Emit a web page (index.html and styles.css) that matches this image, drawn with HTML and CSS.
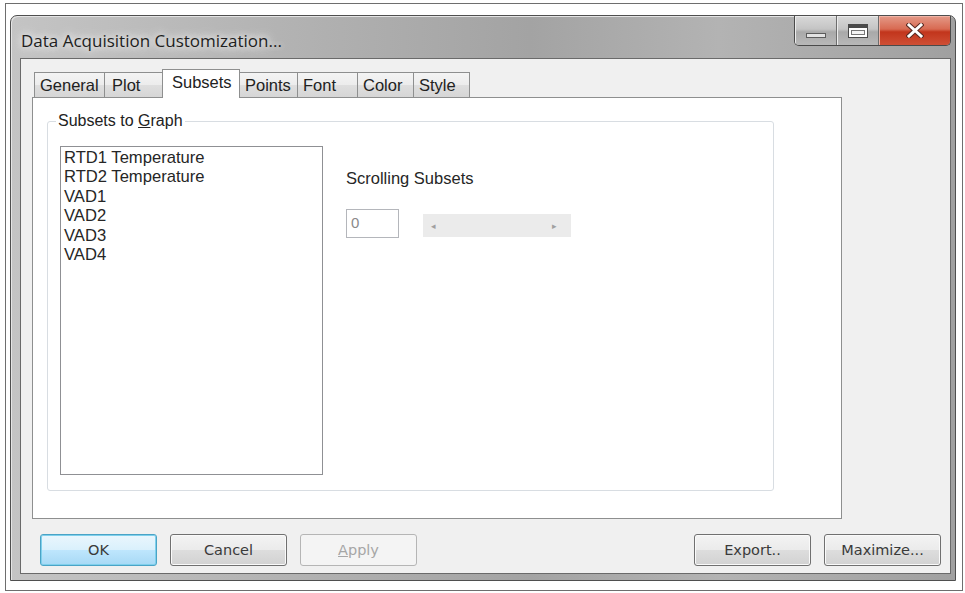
FILE: index.html
```html
<!DOCTYPE html>
<html lang="en">
<head>
  <meta charset="UTF-8">
  <title>Data Acquisition Customization...</title>
  <link rel="stylesheet" href="styles.css">
</head>
<body>
  <div class="screen">
    <div class="window">

      <!-- Title bar -->
      <div class="titlebar">
        <span class="title">Data Acquisition Customization...</span>
        <div class="caption-buttons">
          <div class="cap cap-min"><span class="min-glyph"></span></div>
          <div class="cap cap-max"><span class="max-glyph"></span></div>
          <div class="cap cap-close">
            <svg width="18" height="15" viewBox="0 0 18 15">
              <path d="M3 2 L15 13 M15 2 L3 13" stroke="#5a2a22" stroke-width="5" stroke-linecap="square"/>
              <path d="M3 2 L15 13 M15 2 L3 13" stroke="#ffffff" stroke-width="3" stroke-linecap="square"/>
            </svg>
          </div>
        </div>
      </div>

      <!-- Client area -->
      <div class="client">
        <div class="tab-control">
          <div class="tabs">
            <div class="tab">General</div>
            <div class="tab">Plot</div>
            <div class="tab active">Subsets</div>
            <div class="tab">Points</div>
            <div class="tab">Font</div>
            <div class="tab">Color</div>
            <div class="tab">Style</div>
          </div>

          <div class="tab-panel">
            <fieldset class="group">
              <legend>Subsets to <u>G</u>raph</legend>
              <div class="group-body">
                <ul class="listbox">
                  <li>RTD1 Temperature</li>
                  <li>RTD2 Temperature</li>
                  <li>VAD1</li>
                  <li>VAD2</li>
                  <li>VAD3</li>
                  <li>VAD4</li>
                </ul>
                <div class="scrolling">
                  <div class="label">Scrolling Subsets</div>
                  <div class="scroll-row">
                    <div class="edit">0</div>
                    <div class="hscroll">
                      <span class="arrow">&#9666;</span>
                      <span class="arrow">&#9656;</span>
                    </div>
                  </div>
                </div>
              </div>
            </fieldset>
          </div>
        </div>

        <!-- Dialog buttons -->
        <div class="button-row">
          <button class="btn default">OK</button>
          <button class="btn">Cancel</button>
          <button class="btn disabled"><u>A</u>pply</button>
          <div class="spacer"></div>
          <button class="btn">Export..</button>
          <button class="btn">Maximize...</button>
        </div>
      </div>

    </div>
  </div>
</body>
</html>
```

FILE: styles.css
```css
html, body {
  margin: 0;
  padding: 0;
  background-color: #ffffff;
}
body {
  width: 965px;
  height: 593px;
  overflow: hidden;
  font-family: "Liberation Sans", Arial, sans-serif;
}
.screen {
  box-sizing: border-box;
  width: 958px;
  height: 588px;
  margin: 3px 0 0 5px;
  border: 1px solid #6e6e6e;
  padding: 11px 6px 9px 4px;
  background-color: #ffffff;
}

/* Window frame */
.window {
  box-sizing: border-box;
  height: 566px;
  display: flex;
  flex-direction: column;
  border: 1px solid #4f4f4f;
  border-radius: 7px 7px 0 0;
  padding: 0 4px 6px 9px;
  background: linear-gradient(to right, #c4c4c4 0%, #b5b5b5 25%, #a3a3a3 55%, #b3b3b3 75%, #a0a0a0 100%);
  box-shadow: inset 1px 1px 0 #e4e4e4;
}
.titlebar {
  height: 42px;
  display: flex;
  justify-content: space-between;
  align-items: flex-start;
}
.title {
  margin-top: 13px;
  padding-left: 1px;
  font-family: "Open Sans", "Noto Sans", sans-serif;
  font-size: 17px;
  color: #1e1e1e;
  text-shadow: 0 0 6px #f0f0f0, 0 0 10px #e8e8e8, 0 0 14px #e0e0e0;
}
.caption-buttons {
  display: flex;
  height: 29px;
  border: 1px solid #4a4a4a;
  border-top: none;
  border-radius: 0 0 5px 5px;
  overflow: hidden;
}
.cap {
  height: 29px;
  display: flex;
  align-items: center;
  justify-content: center;
}
.cap-min, .cap-max {
  width: 41px;
  background: linear-gradient(#d9d9d9 0%, #c4c4c4 45%, #a9a9a9 55%, #b8b8b8 100%);
  box-shadow: inset 1px 1px 0 #ececec;
  border-right: 1px solid #6d6d6d;
}
.cap-close {
  width: 71px;
  background: linear-gradient(#e49a88 0%, #d86a52 45%, #c2351c 55%, #cf4f35 100%);
  box-shadow: inset 1px 1px 0 #f0b4a6;
}
.min-glyph {
  width: 18px;
  height: 3px;
  margin-top: 10px;
  background-color: #e2e2e2;
  border: 1px solid #5c5c5c;
}
.max-glyph {
  box-sizing: border-box;
  width: 20px;
  height: 14px;
  border: 1px solid #4a4a4a;
  border-top-width: 4px;
  background-color: #f4f4f4;
  box-shadow: inset 0 0 0 2px #ffffff, inset 0 0 0 3px #777777;
}

/* Client area */
.client {
  flex: 1;
  display: flex;
  flex-direction: column;
  border: 1px solid #6a6a6a;
  background-color: #f0f0f0;
  padding: 10px 0 7px 11px;
}
.tab-control {
  width: 810px;
}
.tabs {
  height: 28px;
  display: flex;
  align-items: flex-end;
  padding-left: 2px;
  font-size: 16.5px;
  color: #222;
}
.tab {
  box-sizing: border-box;
  height: 25px;
  line-height: 24px;
  padding-left: 5px;
  border-top: 1px solid #8e8f8f;
  border-left: 1px solid #8e8f8f;
  background: linear-gradient(#f4f4f4 0%, #ececec 50%, #dedede 51%, #d6d6d6 100%);
}
.tab:nth-child(1) { width: 70px; }
.tab:nth-child(2) { width: 58px; padding-left: 7px; }
.tab:nth-child(4) { width: 57px; }
.tab:nth-child(5) { width: 60px; }
.tab:nth-child(6) { width: 56px; }
.tab:nth-child(7) { width: 57px; border-right: 1px solid #8e8f8f; }
.tab.active {
  position: relative;
  z-index: 1;
  width: 78px;
  height: 29px;
  margin-bottom: -1px;
  padding-left: 9px;
  line-height: 24px;
  border-right: 1px solid #8e8f8f;
  background: #ffffff;
}
.tab.active + .tab {
  border-left: none;
}
.tab-panel {
  box-sizing: border-box;
  height: 422px;
  border: 1px solid #8e8f8f;
  background-color: #ffffff;
  padding: 14px 0 0 14px;
}

/* Group box */
.group {
  box-sizing: border-box;
  width: 727px;
  height: 379px;
  margin: 0;
  padding: 0 12px;
  border: 1px solid #d8dde2;
  border-radius: 3px;
}
.group legend {
  margin-left: -4px;
  padding: 0 2px;
  font-size: 16px;
  line-height: 18px;
  color: #222;
}
.group-body {
  display: flex;
  margin-top: 16px;
}
.listbox {
  box-sizing: border-box;
  width: 263px;
  height: 329px;
  margin: 0;
  padding: 1px 3px;
  list-style: none;
  border: 1px solid #8f9094;
  font-size: 16.6px;
  line-height: 19.4px;
  color: #262626;
}
.scrolling {
  margin-left: 23px;
  padding-top: 23px;
}
.label {
  font-size: 16.5px;
  line-height: 18px;
  color: #262626;
}
.scroll-row {
  display: flex;
  margin-top: 22px;
}
.edit {
  box-sizing: border-box;
  width: 53px;
  height: 29px;
  padding: 4px 0 0 4px;
  border: 1px solid #b4b6bb;
  font-size: 15px;
  color: #8a8a8a;
}
.hscroll {
  width: 148px;
  height: 23px;
  margin: 5px 0 0 24px;
  display: flex;
  justify-content: space-between;
  align-items: center;
  padding: 0 14px 0 8px;
  box-sizing: border-box;
  background-color: #ebebeb;
}
.arrow {
  font-size: 9px;
  color: #a0a0a0;
}

/* Buttons */
.button-row {
  display: flex;
  gap: 13px;
  margin: 15px 9px 0 8px;
}
.spacer {
  flex: 1;
}
.btn {
  box-sizing: border-box;
  width: 117px;
  height: 32px;
  padding: 0;
  border: 1px solid #707070;
  border-radius: 3px;
  font-family: "DejaVu Sans", Tahoma, sans-serif;
  font-size: 14.5px;
  color: #3a3a3a;
  background: linear-gradient(#f3f3f3 0%, #ebebeb 50%, #dddddd 51%, #d2d2d2 100%);
  box-shadow: inset 0 0 0 1px #fafafa;
}
.btn.default {
  border-color: #4aa3c6;
  background: linear-gradient(#eaf6fd 0%, #d9f0fc 50%, #bee6fd 51%, #a7d9f5 100%);
  box-shadow: inset 0 0 0 1px #7fd0ec;
}
.btn.disabled {
  border-color: #b5b5b5;
  background: #f4f4f4;
  color: #a6a6a6;
  box-shadow: none;
}
```
